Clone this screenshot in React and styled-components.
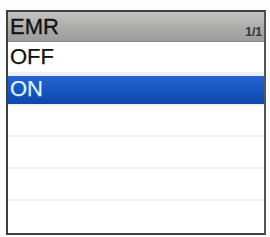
import React from "react";
import styled, { createGlobalStyle } from "styled-components";

const Global = createGlobalStyle`
  html, body { margin: 0; padding: 0; background: #fff; }
  body { font-family: "Liberation Sans", Arial, sans-serif; }
`;

const Page = styled.div`
  width: 270px;
  height: 237px;
  padding: 10px 0 0 6px;
  box-sizing: border-box;
  background: #fdfdfd;
`;

const Frame = styled.div`
  width: 260px;
  height: 225px;
  box-sizing: border-box;
  border: 2px solid #3f3f3f;
  border-right-color: #555;
  display: flex;
  flex-direction: column;
  background: #fff;
`;

const Header = styled.div`
  height: 29px;
  flex: none;
  display: flex;
  align-items: center;
  justify-content: space-between;
  padding: 0 2px 0 2px;
  background: linear-gradient(#c4c4c2, #a9a9a7 60%, #9c9c9a);
  border-bottom: 1px solid #8a8a8a;
`;

const Title = styled.span`
  font-size: 22px;
  color: #111;
  -webkit-text-stroke: 0.3px #111;
`;

const Page1 = styled.span`
  align-self: flex-end;
  margin-bottom: 2px;
  font-size: 12px;
  font-weight: bold;
  color: #333;
`;

const Row = styled.div`
  flex: 1;
  display: flex;
  align-items: center;
  padding-left: 2px;
  font-size: 22px;
  color: ${(p) => (p.$selected ? "#dff4ff" : "#111")};
  background: ${(p) =>
    p.$selected ? "linear-gradient(#2566d2, #1553c0 60%, #0f47ab)" : "#fff"};
  border-bottom: 2px solid ${(p) => (p.$last ? "transparent" : "#efefef")};
  -webkit-text-stroke: 0.25px currentColor;
  box-shadow: ${(p) => (p.$selected ? "0 2px 0 #e6f0ff inset" : "none")};
`;

const items = ["OFF", "ON", "", "", "", ""];

export default function App() {
  return (
    <>
      <Global />
      <Page>
        <Frame>
          <Header>
            <Title>EMR</Title>
            <Page1>1/1</Page1>
          </Header>
          {items.map((t, i) => (
            <Row key={i} $selected={i === 1} $last={i === items.length - 1}>
              {t}
            </Row>
          ))}
        </Frame>
      </Page>
    </>
  );
}
